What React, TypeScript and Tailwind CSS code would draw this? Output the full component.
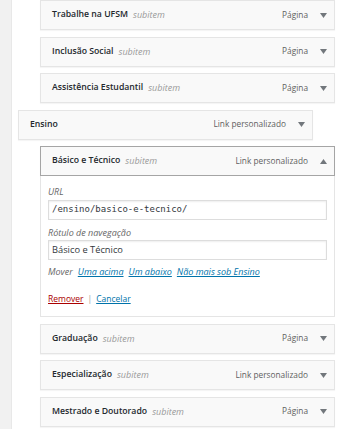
import React from "react";

const font = { fontFamily: '"Open Sans", "Noto Sans", sans-serif' };

function Arrow({ up }: { up?: boolean }) {
  return (
    <svg width="7" height="5" viewBox="0 0 7 5" className="shrink-0">
      {up ? (
        <path d="M0 5 L3.5 0 L7 5 Z" fill="#72777c" />
      ) : (
        <path d="M0 0 L7 0 L3.5 5 Z" fill="#72777c" />
      )}
    </svg>
  );
}

interface ItemProps {
  title: string;
  sub?: boolean;
  type: string;
  open?: boolean;
  className?: string;
}

function ItemHandle({ title, sub = true, type, open, className = "" }: ItemProps) {
  return (
    <div
      className={`flex h-[30px] items-center border bg-[#f9f9f9] pl-[11px] pr-[6px] shadow-[0_1px_1px_rgba(0,0,0,0.04)] ${
        open ? "border-[#a5a5a5]" : "border-[#e5e5e5]"
      } ${className}`}
    >
      <span className="text-[8.7px] font-semibold text-[#23282d]">{title}</span>
      {sub && <span className="ml-[5px] text-[9px] italic text-[#999]">subitem</span>}
      <span className="ml-auto text-[8.3px] text-[#5f5f5f]">{type}</span>
      <span className="ml-[10px] flex w-[10px] justify-center">
        <Arrow up={open} />
      </span>
    </div>
  );
}

export default function App() {
  return (
    <div className="flex h-[429px] w-[355px] overflow-hidden bg-white" style={font}>
      {/* admin sidebar edge */}
      <div className="w-[12px] shrink-0 border-r border-[#e8e8e8] bg-[#f1f1f1]" />

      <div className="flex flex-1 flex-col gap-[6.5px] pl-[28px] pr-[20px]">
        <ItemHandle title="Trabalhe na UFSM" type="Página" />
        <ItemHandle title="Inclusão Social" type="Página" />
        <ItemHandle title="Assistência Estudantil" type="Página" />
        <ItemHandle title="Ensino" sub={false} type="Link personalizado" className="-ml-[22px] mr-[22px]" />

        {/* expanded item */}
        <div className="flex flex-col">
          <ItemHandle title="Básico e Técnico" type="Link personalizado" open />
          <div className="flex h-[141px] flex-col border border-t-0 border-[#e5e5e5] bg-white px-[7px] pt-[9px]">
            <label className="text-[9px] leading-[14px] italic text-[#666]">URL</label>
            <div className="mt-[1px] flex h-[20px] items-center border border-[#ddd] bg-white px-[3px] shadow-[inset_0_1px_2px_rgba(0,0,0,0.07)]">
              <span className="text-[9px] text-[#32373c]" style={{ fontFamily: '"DejaVu Sans Mono", "Liberation Mono", monospace' }}>
                /ensino/basico-e-tecnico/
              </span>
            </div>
            <label className="mt-[6px] text-[9px] leading-[14px] italic text-[#666]">Rótulo de navegação</label>
            <div className="flex h-[20px] items-center border border-[#ddd] bg-white px-[3px] shadow-[inset_0_1px_2px_rgba(0,0,0,0.07)]">
              <span className="text-[9.3px] text-[#32373c]">Básico e Técnico</span>
            </div>
            <div className="mt-[5px] flex gap-[5px] text-[9px] leading-[14px] italic">
              <span className="text-[#666]">Mover</span>
              <a className="text-[#0073aa] underline">Uma acima</a>
              <a className="text-[#0073aa] underline">Um abaixo</a>
              <a className="text-[#0073aa] underline">Não mais sob Ensino</a>
            </div>
            <div className="mt-[13px] flex gap-[4px] text-[8.5px] leading-[14px]">
              <a className="text-[#a00] underline">Remover</a>
              <span className="text-[#999]">|</span>
              <a className="text-[#0073aa] underline">Cancelar</a>
            </div>
          </div>
        </div>

        <ItemHandle title="Graduação" type="Página" />
        <ItemHandle title="Especialização" type="Link personalizado" />
        <ItemHandle title="Mestrado e Doutorado" type="Página" />
      </div>
    </div>
  );
}
